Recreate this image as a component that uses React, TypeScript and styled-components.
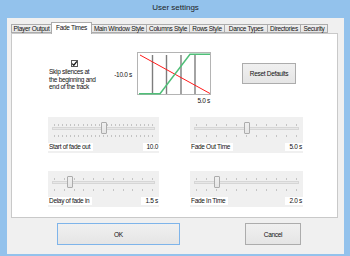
import React from 'react'
import styled, { createGlobalStyle } from 'styled-components'

const GlobalStyle = createGlobalStyle`
  html, body {
    margin: 0;
    padding: 0;
    background: #ffffff;
  }
  body {
    font-family: 'Liberation Sans', Arial, sans-serif;
  }
`

const TABS = [
  { name: 'Player Output', width: 41 },
  { name: 'Fade Times', width: 41, active: true },
  { name: 'Main Window Style', width: 56 },
  { name: 'Columns Style', width: 44 },
  { name: 'Rows Style', width: 36 },
  { name: 'Dance Types', width: 44 },
  { name: 'Directories', width: 34 },
  { name: 'Security', width: 28 },
]

type SliderInfo = {
  label: string
  value: string
  frac: number
  ticks: number
  width: number
}

const SLIDERS: SliderInfo[] = [
  { label: 'Start of fade out', value: '10.0', frac: 0.5, ticks: 25, width: 111 },
  { label: 'Fade Out Time', value: '5.0 s', frac: 0.5, ticks: 11, width: 113 },
  { label: 'Delay of fade in', value: '1.5 s', frac: 0.15, ticks: 11, width: 111 },
  { label: 'Fade In Time', value: '2.0 s', frac: 0.2, ticks: 11, width: 113 },
]

const Slider: React.FC<{ info: SliderInfo }> = ({ info }) => {
  const ticks = Array.from({ length: info.ticks })
  const trackLen = info.width - 8 - 6
  return (
    <SliderBox $w={info.width}>
      <TrackArea>
        <TickRow>
          {ticks.map((_, i) => (
            <Tick key={`t_${i}`} />
          ))}
        </TickRow>
        <Track />
        <TickRow>
          {ticks.map((_, i) => (
            <Tick key={`b_${i}`} />
          ))}
        </TickRow>
        <Thumb style={{ left: `${4 + Math.round(info.frac * trackLen)}px` }} />
      </TrackArea>
      <LabelRow>
        <SmallLabel>{info.label}</SmallLabel>
        <ValueLabel>{info.value}</ValueLabel>
      </LabelRow>
    </SliderBox>
  )
}

const FadeChart = () => (
  <svg width="74" height="43" viewBox="0 0 74 43">
    <rect x="0.5" y="0.5" width="73" height="42" fill="#ffffff" stroke="#b4b4b4" />
    {[15.5, 29.5, 44, 58].map((x) => (
      <line key={x} x1={x} y1="3" x2={x} y2="42" stroke="#7d7d7d" strokeWidth="1.4" />
    ))}
    <line x1="3" y1="3" x2="73" y2="41.5" stroke="#ff1a1a" strokeWidth="1" />
    <polyline points="2,41.8 23,41.8 53,2.2 73,2.2" fill="none" stroke="#4fbf78" strokeWidth="1.5" />
  </svg>
)

const App: React.FC = () => {
  return (
    <>
      <GlobalStyle />
      <Frame>
        <TitleBar>User settings</TitleBar>
        <Client>
          <TabStrip>
            {TABS.map((tab) => (
              <Tab key={tab.name} $w={tab.width} $active={!!tab.active}>
                {tab.name}
              </Tab>
            ))}
          </TabStrip>
          <Panel>
            <TopRow>
              <CheckColumn>
                <CheckBox>
                  <svg width="7" height="7" viewBox="0 0 7 7">
                    <path d="M1.2 3.6 L2.8 5.2 L5.9 1.4" fill="none" stroke="#1a1a1a" strokeWidth="1.3" />
                  </svg>
                </CheckBox>
                <CheckText>
                  Skip silences at
                  <br />
                  the beginning and
                  <br />
                  end of the track
                </CheckText>
              </CheckColumn>
              <MinLabel>-10.0 s</MinLabel>
              <ChartColumn>
                <FadeChart />
                <ChartCaption>5.0 s</ChartCaption>
              </ChartColumn>
              <ResetButton>Reset Defaults</ResetButton>
            </TopRow>
            <SliderGrid>
              {SLIDERS.map((s) => (
                <Slider key={s.label} info={s} />
              ))}
            </SliderGrid>
          </Panel>
          <ButtonRow>
            <DialogButton $w={123} $default>
              OK
            </DialogButton>
            <DialogButton $w={56}>Cancel</DialogButton>
          </ButtonRow>
        </Client>
      </Frame>
    </>
  )
}

const Frame = styled.div`
  width: 350px;
  height: 256px;
  display: flex;
  flex-direction: column;
  background: #93c2ec;
  box-sizing: border-box;
  padding: 0 6px 2px 7px;
  overflow: hidden;
`

const TitleBar = styled.div`
  height: 18px;
  display: flex;
  align-items: center;
  justify-content: center;
  padding-bottom: 3px;
  box-sizing: border-box;
  font-size: 8px;
  color: #1e1e1e;
`

const Client = styled.div`
  flex: 1;
  background: #f0f0f0;
  display: flex;
  flex-direction: column;
  padding: 4px 0 0 4px;
  box-sizing: border-box;
  font-size: 6.5px;
  letter-spacing: -0.3px;
  color: #111111;
`

const TabStrip = styled.div`
  height: 11px;
  display: flex;
  align-items: flex-end;
  padding-left: 1px;
  position: relative;
  z-index: 1;
`

const Tab = styled.div<{ $w: number; $active: boolean }>`
  width: ${(p) => p.$w}px;
  height: ${(p) => (p.$active ? 12 : 9)}px;
  margin-bottom: ${(p) => (p.$active ? -1 : 0)}px;
  box-sizing: border-box;
  display: flex;
  align-items: center;
  justify-content: center;
  white-space: nowrap;
  border: 1px solid #acacac;
  border-bottom: ${(p) => (p.$active ? 'none' : '1px solid #acacac')};
  margin-left: -1px;
  background: ${(p) => (p.$active ? '#ffffff' : 'linear-gradient(#f0f0f0, #e5e5e5)')};
  padding-bottom: ${(p) => (p.$active ? 2 : 0)}px;
`

const Panel = styled.div`
  width: 327px;
  height: 185px;
  box-sizing: border-box;
  background: #ffffff;
  border: 1px solid #c9c9c9;
  padding-left: 36px;
  display: flex;
  flex-direction: column;
`

const TopRow = styled.div`
  height: 83px;
  display: flex;
  align-items: flex-start;
`

const CheckColumn = styled.div`
  width: 50px;
  margin-left: 1px;
  margin-top: 26px;
  display: flex;
  flex-direction: column;
`

const CheckBox = styled.div`
  width: 7px;
  height: 7px;
  box-sizing: border-box;
  margin-left: 22px;
  border: 1px solid #5a5a5a;
  background: #ffffff;
  display: flex;
  align-items: center;
  justify-content: center;
  svg {
    flex-shrink: 0;
  }
`

const CheckText = styled.div`
  margin-top: 1px;
  line-height: 7.5px;
  white-space: nowrap;
`

const MinLabel = styled.div`
  width: 33px;
  margin-top: 37px;
  text-align: right;
  padding-right: 1px;
  line-height: 8px;
  white-space: nowrap;
`

const ChartColumn = styled.div`
  margin-left: 4px;
  margin-top: 18px;
  display: flex;
  flex-direction: column;
  align-items: flex-end;
  svg {
    display: block;
  }
`

const ChartCaption = styled.div`
  margin-top: 2px;
  padding-right: 1px;
  line-height: 8px;
`

const ResetButton = styled.div`
  width: 54px;
  height: 21px;
  margin-left: 31px;
  margin-top: 29px;
  box-sizing: border-box;
  border: 1px solid #acacac;
  background: linear-gradient(#f0f0f0, #e5e5e5);
  display: flex;
  align-items: center;
  justify-content: center;
  white-space: nowrap;
`

const SliderGrid = styled.div`
  display: grid;
  grid-template-columns: 111px 113px;
  column-gap: 31px;
  row-gap: 18px;
`

const SliderBox = styled.div<{ $w: number }>`
  width: ${(p) => p.$w}px;
  height: 36px;
  background: #f0f0f0;
  display: flex;
  flex-direction: column;
`

const TrackArea = styled.div`
  position: relative;
  height: 26px;
  box-sizing: border-box;
  padding-top: 7px;
  display: flex;
  flex-direction: column;
`

const TickRow = styled.div`
  height: 2px;
  margin: 0 6px;
  display: flex;
  justify-content: space-between;
`

const Tick = styled.div`
  width: 1px;
  height: 2px;
  background: #c4c4c4;
`

const Track = styled.div`
  height: 3px;
  margin: 1px 4px 5px 4px;
  box-sizing: border-box;
  background: #e7e7e7;
  border: 1px solid #d6d6d6;
`

const Thumb = styled.div`
  position: absolute;
  top: 5px;
  width: 6px;
  height: 12px;
  box-sizing: border-box;
  border: 1px solid #acacac;
  border-radius: 1px;
  background: linear-gradient(#f0f0f0, #e5e5e5);
`

const LabelRow = styled.div`
  height: 8px;
  display: flex;
  justify-content: space-between;
`

const SmallLabel = styled.div`
  background: #ffffff;
  line-height: 8px;
  padding: 0 3px 0 1px;
  white-space: nowrap;
`

const ValueLabel = styled.div`
  background: #ffffff;
  line-height: 8px;
  padding: 0 1px 0 4px;
  min-width: 10px;
  text-align: right;
  white-space: nowrap;
`

const ButtonRow = styled.div`
  display: flex;
  gap: 65px;
  padding-left: 46px;
  margin-top: 5px;
`

const DialogButton = styled.div<{ $w: number; $default?: boolean }>`
  width: ${(p) => p.$w}px;
  height: 22px;
  box-sizing: border-box;
  border: 1px solid ${(p) => (p.$default ? '#7eb4ea' : '#acacac')};
  background: linear-gradient(#f0f0f0, #e5e5e5);
  display: flex;
  align-items: center;
  justify-content: center;
`

export default App
